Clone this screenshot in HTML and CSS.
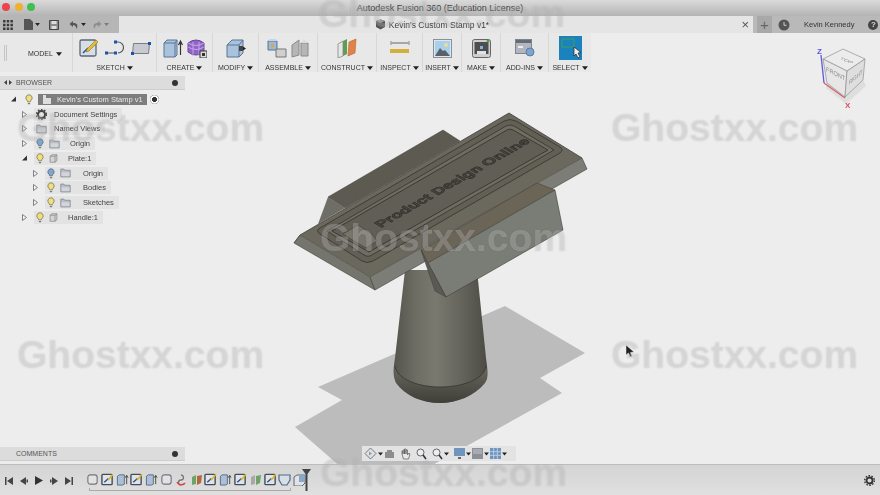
FILE: index.html
```html
<!DOCTYPE html>
<html lang="en">
<head>
    <meta charset="UTF-8">
    <title>Autodesk Fusion 360 (Education License)</title>
    <link rel="stylesheet" href="styles.css">
</head>
<body>
    <svg class="defs" width="0" height="0">
        <symbol id="bulb-y" viewBox="0 0 10 14"><path d="M5 1a4 4 0 0 1 2.4 7.2L6.6 10H3.400L2.600 8.200A4 4 0 0 1 5 1z" fill="#f1df7c" stroke="#77745a"/><path d="M3.500 11.500h3v1.500h-3z" fill="#777"/></symbol>
        <symbol id="bulb-b" viewBox="0 0 10 14"><path d="M5 1a4 4 0 0 1 2.400 7.200L6.600 10H3.400L2.600 8.200A4 4 0 0 1 5 1z" fill="#7ea6cf" stroke="#5d6b7a"/><path d="M3.500 11.500h3v1.500h-3z" fill="#777"/></symbol>
        <symbol id="folder" viewBox="0 0 14 12"><path d="M1 1h4l1 1.500h7V11H1z" fill="#b9bdc4" stroke="#85888e"/><path d="M2 5h10v5H2z" fill="#d2d5da"/></symbol>
        <symbol id="comp" viewBox="0 0 12 12"><path d="M1.500 3 4 1h6.500v8L8 11H1.500z" fill="#d5d5d5" stroke="#858585"/><path d="M8 3v8M1.500 3H8l2.500-2" fill="none" stroke="#858585"/></symbol>
        <symbol id="closed" viewBox="0 0 5 7"><path d="M.5.500 4.500 3.500.5 6.500z" fill="#f4f4f4" stroke="#666" stroke-width=".8"/></symbol>
        <symbol id="opened" viewBox="0 0 6 6"><path d="M6 0v6H0z" fill="#333"/></symbol>
        <symbol id="tl-sketch" viewBox="0 0 14 14"><rect x="1" y="1.500" width="11" height="11" rx="1" fill="#dfe3ea" stroke="#454c58" stroke-width="1.500"/><path d="M3.500 10 8 6" stroke="#2c4f86" stroke-width="1.500"/><path d="m7 7 5-6 1.500 1-5 6z" fill="#dcb92e"/></symbol>
        <symbol id="tl-box" viewBox="0 0 14 14"><rect x="2" y="2" width="10" height="10" rx="2.500" fill="#e2e2e2" stroke="#70767e" stroke-width="1.200"/></symbol>
        <symbol id="tl-ext" viewBox="0 0 14 14"><path d="M1.500 3.500 3.500 2H9v10l-2 1H1.500z" fill="#a9c0d8" stroke="#5a6b7c"/><path d="M11.500 12V3M10 5l1.500-2.500L13 5" fill="none" stroke="#444"/></symbol>
        <symbol id="arrow-dn" viewBox="0 0 8 5"><path d="M0 0h8L4 5z" fill="#222"/></symbol>
    </svg>

    <header class="titlebar">
        <div class="lights">
            <i class="light red"></i>
            <i class="light yellow"></i>
            <i class="light green"></i>
        </div>
        <span class="app-title">Autodesk Fusion 360 (Education License)</span>
    </header>

    <div class="tabbar">
        <div class="quick">
            <svg class="qa-grid" width="10" height="10" viewBox="0 0 10 10"><path d="M0 0h2.500v2.500H0zM3.700 0h2.500v2.500H3.700zM7.400 0h2.500v2.500H7.400zM0 3.700h2.500v2.500H0zM3.700 3.700h2.500v2.500H3.700zM7.400 3.700h2.500v2.500H7.400zM0 7.400h2.500v2.500H0zM3.700 7.400h2.500v2.500H3.700zM7.400 7.400h2.500v2.500H7.400z" fill="#3c3c3c"/></svg>
            <svg class="qa-file" width="9" height="11" viewBox="0 0 9 11"><path d="M0 0h6l3 3v8H0z" fill="#555"/></svg>
            <svg class="qa-arrow" width="5" height="3"><use href="#arrow-dn"/></svg>
            <svg class="qa-save" width="10" height="10" viewBox="0 0 10 10"><path d="M.5.5h9v9h-9z" fill="#8a8a8a" stroke="#444"/><path d="M2.500 1h5v3h-5zM2.500 6h5v3h-5z" fill="#ddd"/></svg>
            <svg class="qa-undo" width="10" height="10" viewBox="0 0 10 10"><path d="M4 1 .5 4 4 7V5c2 0 3 1 3.500 4C9.500 5 8 2.800 4 3z" fill="#555"/></svg>
            <svg class="qa-arrow" width="5" height="3"><use href="#arrow-dn"/></svg>
            <svg class="qa-redo" width="10" height="10" viewBox="0 0 10 10"><path d="M6 1l3.500 3L6 7V5C4 5 3 6 2.500 9 .5 5 2 2.800 6 3z" fill="#8e8e8e"/></svg>
            <svg class="qa-arrow faint" width="5" height="3"><use href="#arrow-dn"/></svg>
        </div>
        <div class="doc-tab">
            <span class="doc-name">
                <svg width="11" height="11" viewBox="0 0 11 11"><path d="M1 2 5.500.5 10 2v6L5.500 10.500 1 8z" fill="#555"/><path d="M1 2l4.500 2L10 2 5.500 .5z" fill="#9a9a9a"/></svg>
                Kevin's Custom Stamp v1*
            </span>
            <span class="doc-close">×</span>
        </div>
        <div class="tab-right">
            <span class="tab-plus">+</span>
            <svg class="clock" width="12" height="12" viewBox="0 0 12 12"><circle cx="6" cy="6" r="5.500" fill="#555"/><path d="M6 3v3.300h2.500" fill="none" stroke="#ccc"/></svg>
            <span class="user-name">Kevin Kennedy</span>
            <span class="help">?</span>
        </div>
    </div>

    <nav class="ribbon">
        <div class="grip"></div>
        <div class="workspace">MODEL <svg width="6" height="4"><use href="#arrow-dn"/></svg></div>

        <section class="group g-sketch">
            <div class="tools">
                <svg width="20" height="20" viewBox="0 0 20 20"><rect x="1" y="2" width="16" height="16" rx="1.500" fill="#d8dee6" stroke="#59677a" stroke-width="1.300"/><path d="M4 15 9 10" stroke="#24528f" stroke-width="1.500"/><path d="m8 11 9-9 2 2-9 9-3 1z" fill="#e5bd32" stroke="#8c7420" stroke-width=".6"/></svg>
                <svg width="20" height="16" viewBox="0 0 20 16"><path d="M2 13h9M10 2h3a5.500 5.500 0 0 1 0 11" fill="none" stroke="#555" stroke-width="1.200"/><g fill="#1f4fb0"><rect x="0" y="11.500" width="3" height="3"/><rect x="9" y="11.500" width="3" height="3"/><rect x="9" y=".5" width="3" height="3"/></g></svg>
                <svg width="20" height="14" viewBox="0 0 20 14"><path d="M2.500 2.500h16l-1 10h-16z" fill="#c7cad0" stroke="#7a7d84"/><g fill="#1f4fb0"><rect x="17" y="1" width="3" height="3"/><rect x="0" y="11" width="3" height="3"/></g></svg>
            </div>
            <span class="label">SKETCH <svg width="6" height="4"><use href="#arrow-dn"/></svg></span>
        </section>

        <section class="group g-create">
            <div class="tools">
                <svg width="20" height="20" viewBox="0 0 20 20"><path d="M1 5 4 2h10v15l-2 2H1z" fill="#a9c3de" stroke="#5a7492"/><path d="M12 19V5H1M12 5l2-3" fill="none" stroke="#5a7492"/><path d="M17.500 17V4M15.500 7l2-4 2 4" fill="none" stroke="#333" stroke-width="1.200"/></svg>
                <svg width="20" height="20" viewBox="0 0 20 20"><path d="M1 5q8-6 16 0v9q-8 6-16 0z" fill="#9264c9" stroke="#6a4498"/><path d="M1 9q8 5 16 0M1 5q8 5 16 0M6 4v14M12 4v14" fill="none" stroke="#c7aee6" stroke-width=".9"/><rect x="13" y="13" width="7" height="7" fill="#ddd" stroke="#333"/><path d="M15 15h3v3h-3z" fill="#333"/></svg>
            </div>
            <span class="label">CREATE <svg width="6" height="4"><use href="#arrow-dn"/></svg></span>
        </section>

        <section class="group g-modify">
            <div class="tools">
                <svg width="20" height="20" viewBox="0 0 20 20"><path d="M1 7 6 2h11v13l-4 4H1z" fill="#a9c3de" stroke="#5a7492"/><path d="M13 19V7H1M13 7l4-5" fill="none" stroke="#5a7492"/><path d="M13 8h4v5h-4z" fill="#444"/><path d="m17 8.500 3 2-3 2z" fill="#222"/></svg>
            </div>
            <span class="label">MODIFY <svg width="6" height="4"><use href="#arrow-dn"/></svg></span>
        </section>

        <section class="group g-assemble">
            <div class="tools">
                <svg width="20" height="20" viewBox="0 0 20 20"><path d="M1 3h9v9H1z" fill="#9cb9d6" stroke="#5a7492"/><path d="M9 11h10v8H9z" fill="#d0d0d0" stroke="#777"/><path d="M3 1h6l1 2H1z" fill="#c4d6e8"/><path d="M4 6h3v3H4z" fill="#e6a23c"/></svg>
                <svg width="18" height="20" viewBox="0 0 18 20"><path d="M1 7 8 2v15l-7 2zM10 5h7v13h-7z" fill="#b6b6b6" stroke="#8a8a8a"/><path d="M10 5l3-4 4 4" fill="#dcdcdc"/></svg>
            </div>
            <span class="label">ASSEMBLE <svg width="6" height="4"><use href="#arrow-dn"/></svg></span>
        </section>

        <section class="group g-construct">
            <div class="tools">
                <svg width="20" height="20" viewBox="0 0 20 20"><path d="M1 6 6 3v15l-5 2z" fill="#e6e6e6" stroke="#999"/><path d="M6 3l4-2v15l-4 2z" fill="#5f9d57"/><path d="m12 4 7-3-1 14-7 3z" fill="#e0824a" stroke="#b8642f" stroke-width=".6"/></svg>
            </div>
            <span class="label">CONSTRUCT <svg width="6" height="4"><use href="#arrow-dn"/></svg></span>
        </section>

        <section class="group g-inspect">
            <div class="tools">
                <svg width="20" height="14" viewBox="0 0 20 14"><path d="M1.500 2h17" stroke="#666"/><path d="M1 0v4M19 0v4" stroke="#888"/><rect x="0" y="8" width="19" height="4" fill="#d3b03c"/></svg>
            </div>
            <span class="label">INSPECT <svg width="6" height="4"><use href="#arrow-dn"/></svg></span>
        </section>

        <section class="group g-insert">
            <div class="tools">
                <svg width="19" height="19" viewBox="0 0 19 19"><rect x=".5" y=".5" width="18" height="18" fill="#dfe7ee" stroke="#8b8f96"/><rect x="2" y="2" width="15" height="15" fill="#a9d0ea"/><circle cx="13" cy="6" r="2" fill="#f2dc93"/><path d="m2 17 5-8 3 3 2-1 5 6z" fill="#5a6068"/></svg>
            </div>
            <span class="label">INSERT <svg width="6" height="4"><use href="#arrow-dn"/></svg></span>
        </section>

        <section class="group g-make">
            <div class="tools">
                <svg width="19" height="19" viewBox="0 0 19 19"><rect x=".5" y=".5" width="18" height="18" rx="2" fill="#cfcfcf" stroke="#666"/><rect x="2.500" y="3" width="14" height="12" fill="#4e4e4e"/><path d="M5 12h9v3H5z" fill="#e2e2e2"/><path d="M8 7h3v3H8z" fill="#84b4dc"/><circle cx="16" cy="2" r="1.500" fill="#4fa24a"/></svg>
            </div>
            <span class="label">MAKE <svg width="6" height="4"><use href="#arrow-dn"/></svg></span>
        </section>

        <section class="group g-addins">
            <div class="tools">
                <svg width="20" height="18" viewBox="0 0 20 18"><rect x=".5" y=".5" width="16" height="14" fill="#b2b7bf" stroke="#7f848c"/><path d="M1 1h15v3H1z" fill="#666c75"/><path d="M3 7h5v2H3z" fill="#eee"/><circle cx="15" cy="13" r="4" fill="#7fa3cb" stroke="#5b7ca4"/></svg>
            </div>
            <span class="label">ADD-INS <svg width="6" height="4"><use href="#arrow-dn"/></svg></span>
        </section>

        <section class="group g-select">
            <div class="tools">
                <div class="select-tile">
                    <svg width="23" height="24" viewBox="0 0 23 24"><rect x="3" y="3" width="12" height="8" fill="none" stroke="#3d9a6c" stroke-width="1.200"/><path d="m15 11 0 9 2-2 2 4 2-1-2-4 3-.5z" fill="#eee" stroke="#222" stroke-width=".7"/></svg>
                </div>
            </div>
            <span class="label">SELECT <svg width="6" height="4"><use href="#arrow-dn"/></svg></span>
        </section>
    </nav>

    <main class="viewport">
        <!-- the model is drawn on a free canvas behind the panels -->
        <svg class="model" width="880" height="392" viewBox="0 72 880 392">
            <defs>
                <linearGradient id="handle" x1="0" x2="1" y1="0" y2="0">
                    <stop offset="0" stop-color="#55544c"/>
                    <stop offset=".25" stop-color="#6f6e65"/>
                    <stop offset=".45" stop-color="#7a796f"/>
                    <stop offset=".75" stop-color="#63625a"/>
                    <stop offset="1" stop-color="#4b4a43"/>
                </linearGradient>
                <linearGradient id="dome" x1="0" x2="0" y1="0" y2="1">
                    <stop offset="0" stop-color="#6a695f"/>
                    <stop offset="1" stop-color="#3f3e38"/>
                </linearGradient>
            </defs>

            <!-- shadow -->
            <path d="M505 306 585 353 540 378 562 393 375 497 295 427 342 400 318 387z" fill="#bcbcbc"/>

            <!-- handle -->
            <path d="M405 270 477 270 486 358C488 372 488 377 486 381 475 396 456 403 440 403 423 403 405 396 396 381 393 377 393 370 395 358z" fill="url(#handle)"/>
            <path d="M395 366C397 380 420 387 440 387 462 387 484 380 486 366 488 375 487 379 485 383 475 396 456 403 440 403 423 403 405 396 396 383 394 379 394 373 395 366z" fill="url(#dome)"/>
            <path d="M395 366C397 380 420 387 440 387 462 387 484 380 486 366" fill="none" stroke="#35342f" stroke-width=".8"/>

            <!-- back of the block -->
            <path d="M328 197 443 130 460 141 345 208z" fill="#5c5a51" stroke="#3f3e38" stroke-width=".5"/>
            <path d="M328 197 345 208 318 224z" fill="#6f6e66"/>

            <!-- plate top and bevel -->
            <path d="M300 235 509 113 582 158 370 277z" fill="#6b685e"/>
            <path d="M300 235 370 277 375 290 294 243z" fill="#74756d" stroke="#3f3e38" stroke-width=".6" stroke-linejoin="round"/>
            <path d="M370 277 582 158 587 169 375 290z" fill="#7b7d76" stroke="#3f3e38" stroke-width=".6" stroke-linejoin="round"/>
            <path d="M300 235 509 113 582 158" fill="none" stroke="#3f3e38" stroke-width=".8"/>
            <path d="M300 235 294 243" stroke="#3f3e38" stroke-width=".6"/>

            <!-- block under the plate, in front of the bevel -->
            <path d="M421 250 537 183 555 190 428 263z" fill="#6b6558" stroke="#3f3e38" stroke-width=".5"/>
            <path d="M428 263 555 190 563 230 446 297z" fill="#7a7d75" stroke="#3f3e38" stroke-width=".6"/>
            <path d="M421 250 428 263 446 297 435 291z" fill="#5b5a52" stroke="#3f3e38" stroke-width=".5"/>

            <!-- raised border and recess -->
            <path d="M320 228 504 121Q510 118 516 121L560 147Q564 150 560 153L373 261Q367 264 362 261L320 234Q315 231 320 228z" fill="#625f55" stroke="#3a3934" stroke-width=".9"/>
            <path d="M327 231 506 126Q510 124 514 126L554 150 370 256Q367 257 364 255z" fill="#6f6c62" stroke="#3a3934" stroke-width=".9"/>
            <path d="M332 231 507 130Q510 128 513 130L548 150 369 252z" fill="#615e55" stroke="#36352f" stroke-width=".9"/>

            <!-- logo and raised lettering -->
            <path d="M343 234 358 225 372 234 377 241 366 248 349 238z" fill="#77746a" stroke="#48473f" stroke-width=".8"/>
            <text class="stamp-text" transform="matrix(.87 -.5 .7 .4 381 228)">Product Design Online</text>
        </svg>

        <aside class="browser">
            <div class="panel-head">
                <svg class="collapse" width="8" height="5" viewBox="0 0 8 5"><path d="M0 2.500 3 0v5zM8 2.500 5 0v5z" fill="#444"/></svg>
                <span class="panel-title">BROWSER</span>
                <i class="pin"></i>
            </div>
            <ul class="tree">
                <li class="row root">
                    <svg class="tw" width="5" height="6"><use href="#opened"/></svg>
                    <svg class="bulb" width="8" height="11"><use href="#bulb-y"/></svg>
                    <span class="root-name">
                        <svg width="8" height="9" viewBox="0 0 8 9"><path d="M0 0h3v3h5v6H0z" fill="#ddd"/></svg>
                        Kevin's Custom Stamp v1
                    </span>
                    <i class="radio"></i>
                </li>
                <li class="row d1">
                    <svg class="tw" width="5" height="7"><use href="#closed"/></svg>
                    <span class="chip">
                        <svg width="11" height="11" viewBox="0 0 11 11"><circle cx="5.500" cy="5.500" r="3.500" fill="none" stroke="#444" stroke-width="2"/><circle cx="5.500" cy="5.500" r="5" fill="none" stroke="#444" stroke-width="1.500" stroke-dasharray="1.600 1.600"/></svg>
                        <span class="nm s1">Document Settings</span>
                    </span>
                </li>
                <li class="row d1">
                    <svg class="tw" width="5" height="7"><use href="#closed"/></svg>
                    <span class="chip">
                        <svg width="11" height="10"><use href="#folder"/></svg>
                        <span class="nm s1">Named Views</span>
                    </span>
                </li>
                <li class="row d1">
                    <svg class="tw" width="5" height="7"><use href="#closed"/></svg>
                    <span class="chip">
                        <svg width="8" height="11"><use href="#bulb-b"/></svg>
                        <svg class="ico" width="11" height="10"><use href="#folder"/></svg>
                        <span class="nm s2">Origin</span>
                    </span>
                </li>
                <li class="row d1">
                    <svg class="tw" width="5" height="6"><use href="#opened"/></svg>
                    <span class="chip">
                        <svg width="8" height="11"><use href="#bulb-y"/></svg>
                        <svg class="ico" width="9" height="9"><use href="#comp"/></svg>
                        <span class="nm s2">Plate:1</span>
                    </span>
                </li>
                <li class="row d2">
                    <svg class="tw" width="5" height="7"><use href="#closed"/></svg>
                    <span class="chip">
                        <svg width="8" height="11"><use href="#bulb-b"/></svg>
                        <svg class="ico" width="11" height="10"><use href="#folder"/></svg>
                        <span class="nm s3">Origin</span>
                    </span>
                </li>
                <li class="row d2">
                    <svg class="tw" width="5" height="7"><use href="#closed"/></svg>
                    <span class="chip">
                        <svg width="8" height="11"><use href="#bulb-y"/></svg>
                        <svg class="ico" width="11" height="10"><use href="#folder"/></svg>
                        <span class="nm s3">Bodies</span>
                    </span>
                </li>
                <li class="row d2">
                    <svg class="tw" width="5" height="7"><use href="#closed"/></svg>
                    <span class="chip">
                        <svg width="8" height="11"><use href="#bulb-y"/></svg>
                        <svg class="ico" width="11" height="10"><use href="#folder"/></svg>
                        <span class="nm s3">Sketches</span>
                    </span>
                </li>
                <li class="row d1">
                    <svg class="tw" width="5" height="7"><use href="#closed"/></svg>
                    <span class="chip">
                        <svg width="8" height="11"><use href="#bulb-y"/></svg>
                        <svg class="ico" width="9" height="9"><use href="#comp"/></svg>
                        <span class="nm s2">Handle:1</span>
                    </span>
                </li>
            </ul>
        </aside>

        <div class="panel-head comments">
            <span class="panel-title">COMMENTS</span>
            <i class="pin"></i>
        </div>

        <div class="viewcube">
            <svg width="66" height="66" viewBox="0 0 66 66">
                <path d="M11 39 29 53 47 36 50 42 30 60 10 44z" fill="#d9d9d9" opacity=".8"/>
                <path d="M5 11 8 39" stroke="#5a5ae0" stroke-width="1.300"/>
                <path d="M8 39 29 54" stroke="#d8606b" stroke-width="1.300"/>
                <path d="M27 5 49 15 31 27 7 15z" fill="#ececec" stroke="#8f8f8f" stroke-width=".7"/>
                <path d="M7 15 31 27 29 53 11 39z" fill="#e6e6e6" stroke="#8f8f8f" stroke-width=".7"/>
                <path d="M31 27 49 15 47 36 29 53z" fill="#dedede" stroke="#8f8f8f" stroke-width=".7"/>
                <text class="cube-text" transform="matrix(.9 .35 -.5 .35 23 15)">TOP</text>
                <text class="cube-text" transform="matrix(.8 .4 0 .9 10 27)">FRONT</text>
                <text class="cube-text" transform="matrix(.62 -.52 0 .9 33 41)">RIGHT</text>
                <text class="cube-x" x="29" y="64">X</text>
                <text class="cube-z" x="1" y="10">Z</text>
            </svg>
        </div>

        <svg class="cursor" width="10" height="13" viewBox="0 0 10 13"><path d="M1 0v10l2.500-2 1.500 4 2-1-1.500-3.500L9 7z" fill="#222" stroke="#eee" stroke-width=".5"/></svg>

        <div class="navbar">
            <svg width="13" height="13" viewBox="0 0 13 13"><path d="M6.500 1 12 6.500 6.500 12 1 6.500z" fill="#dde2e8" stroke="#777"/><path d="M5 4.500 8 6.500 5 8.500z" fill="#999"/></svg>
            <svg class="nav-arrow" width="5" height="4"><use href="#arrow-dn"/></svg>
            <svg width="11" height="11" viewBox="0 0 11 11"><path d="M1 4h9v6H1zM3 2h5v2H3z" fill="#8d8d8d"/></svg>
            <svg class="nav-gap" width="11" height="12" viewBox="0 0 11 12"><path d="M2 6V3h1v3-4h1.500v4-5H6v5-4h1.500v5L9 5l1 1-1.500 5h-5z" fill="#e8e8e8" stroke="#555" stroke-width=".7"/></svg>
            <svg class="nav-gap" width="11" height="12" viewBox="0 0 11 12"><circle cx="4.500" cy="4.500" r="3.500" fill="#e8eef3" stroke="#666"/><path d="m7 7 3 4" stroke="#333" stroke-width="1.500"/></svg>
            <svg class="nav-gap" width="11" height="12" viewBox="0 0 11 12"><circle cx="4.500" cy="4.500" r="3.500" fill="#e8eef3" stroke="#666"/><path d="m7 7 3 4" stroke="#333" stroke-width="1.500"/></svg>
            <svg class="nav-arrow" width="5" height="4"><use href="#arrow-dn"/></svg>
            <svg class="nav-gap" width="11" height="11" viewBox="0 0 11 11"><path d="M0 0h11v8H0z" fill="#6f95bf"/><path d="M4 9h3v2H4z" fill="#666"/></svg>
            <svg class="nav-arrow" width="5" height="4"><use href="#arrow-dn"/></svg>
            <svg width="11" height="11" viewBox="0 0 11 11"><path d="M0 0h11v11H0z" fill="#8d9097"/><path d="M1 1h9v5H1z" fill="#a8abb1"/></svg>
            <svg class="nav-arrow" width="5" height="4"><use href="#arrow-dn"/></svg>
            <svg width="11" height="11" viewBox="0 0 11 11"><path d="M0 0h11v11H0z" fill="#6f95bf"/><path d="M0 3.700h11M0 7.300h11M3.700 0v11M7.300 0v11" stroke="#c9d8e8" stroke-width=".8"/></svg>
            <svg class="nav-arrow" width="5" height="4"><use href="#arrow-dn"/></svg>
        </div>
    </main>

    <footer class="timeline">
        <div class="player">
            <svg width="8" height="8" viewBox="0 0 8 8"><path d="M0 0h1.500v8H0zM8 0v8L2 4z" fill="#444"/></svg>
            <svg width="8" height="8" viewBox="0 0 8 8"><path d="M6 0v8L0 4zM6.500 2.500H8v3H6.500z" fill="#444"/></svg>
            <svg width="8" height="9" viewBox="0 0 8 9"><path d="M0 0l8 4.500L0 9z" fill="#333"/></svg>
            <svg width="8" height="8" viewBox="0 0 8 8"><path d="M2 0v8l6-4zM0 2.500h1.500v3H0z" fill="#444"/></svg>
            <svg width="8" height="8" viewBox="0 0 8 8"><path d="M0 0v8l6-4zM6.500 0H8v8H6.500z" fill="#444"/></svg>
        </div>
        <div class="track">
            <div class="steps">
                <svg width="13" height="13"><use href="#tl-box"/></svg>
                <svg width="13" height="13"><use href="#tl-sketch"/></svg>
                <svg width="13" height="13"><use href="#tl-ext"/></svg>
                <svg width="13" height="13"><use href="#tl-sketch"/></svg>
                <svg width="13" height="13"><use href="#tl-ext"/></svg>
                <svg width="13" height="13"><use href="#tl-box"/></svg>
                <svg width="13" height="13" viewBox="0 0 13 13"><path d="M6 2a2.500 2.500 0 0 1 0 5 2.500 2.500 0 0 0 0 5" fill="none" stroke="#777" stroke-width="1.300"/><path d="M2 9c1 3 6 4 8 1" fill="none" stroke="#d9434a" stroke-width="1.500"/></svg>
                <svg width="13" height="13" viewBox="0 0 13 13"><path d="M2 4 6 2v9l-4 1z" fill="#6fa468"/><path d="m7 3 5-1-1 8-4 2z" fill="#b2683e"/></svg>
                <svg width="13" height="13"><use href="#tl-sketch"/></svg>
                <svg width="13" height="13"><use href="#tl-ext"/></svg>
                <svg width="13" height="13"><use href="#tl-sketch"/></svg>
                <svg width="13" height="13" viewBox="0 0 13 13"><path d="M2 4 6 2v9l-4 1z" fill="#a8a8a8"/><path d="m7 3 5-1-1 8-4 2z" fill="#6fa468"/></svg>
                <svg width="13" height="13"><use href="#tl-sketch"/></svg>
                <svg width="13" height="13" viewBox="0 0 13 13"><path d="M1 2h11v5l-3 5H4L1 7z" fill="#d8dee6" stroke="#4d6b8e" stroke-width="1.200"/></svg>
                <svg width="13" height="13" viewBox="0 0 13 13"><path d="M1 4 4 2h8v8l-3 3H1z" fill="#dfe3ea" stroke="#666"/><path d="M6 1h6v8H6z" fill="#8ba7c4"/></svg>
            </div>
            <div class="rail"></div>
            <svg class="marker" width="9" height="22" viewBox="0 0 9 22"><path d="M0 0h9L5.500 5V22h-2V5z" fill="#444"/></svg>
        </div>
        <svg class="settings" width="11" height="11" viewBox="0 0 11 11"><circle cx="5.500" cy="5.500" r="3" fill="none" stroke="#333" stroke-width="1.800"/><circle cx="5.500" cy="5.500" r="4.800" fill="none" stroke="#333" stroke-width="1.400" stroke-dasharray="1.600 1.400"/></svg>
    </footer>

    <!-- site watermark lies over everything -->
    <div class="marks" aria-hidden="true">
        <span class="mark m1">Ghostxx.com</span>
        <span class="mark m2">Ghostxx.com</span>
        <span class="mark m3">Ghostxx.com</span>
        <span class="mark m4">Ghostxx.com</span>
        <span class="mark m5">Ghostxx.com</span>
        <span class="mark m6">Ghostxx.com</span>
        <span class="mark m7">Ghostxx.com</span>
    </div>
</body>
</html>
```

FILE: styles.css
```css
* {
    box-sizing: border-box;
}

html, body {
    height: 100%;
}

body {
    margin: 0;
    width: 880px;
    height: 495px;
    overflow: hidden;
    position: relative;
    display: flex;
    flex-direction: column;
    font-family: 'Liberation Sans', Arial, sans-serif;
    color: #333;
    background-color: #ededed;
    filter: blur(.35px);
}

.defs {
    position: absolute;
}

svg {
    display: block;
    flex: none;
}

/* title bar */
.titlebar {
    height: 16px;
    flex: none;
    position: relative;
    display: flex;
    justify-content: center;
    align-items: center;
    background: linear-gradient(#dadada, #b4b4b4);
}

.lights {
    position: absolute;
    left: 2px;
    top: 3px;
    display: flex;
    gap: 4.500px;
}

.light {
    width: 8px;
    height: 8px;
    border-radius: 50%;
}

.light.red { background-color: #e8464c; }
.light.yellow { background-color: #eeb02f; }
.light.green { background-color: #3fc04e; }

.app-title {
    font-size: 9px;
    color: #444;
}

/* tab row */
.tabbar {
    height: 17px;
    flex: none;
    display: flex;
    font-size: 7.500px;
}

.quick {
    width: 119px;
    display: flex;
    align-items: center;
    padding-left: 3px;
    background-color: #b6b6b6;
}

.qa-file { margin-left: 11px; }
.qa-arrow { margin-left: 2px; }
.qa-save { margin-left: 9px; }
.qa-undo { margin-left: 10px; }
.qa-redo { margin-left: 6px; }
.qa-arrow.faint { opacity: .4; }

.doc-tab {
    width: 634px;
    position: relative;
    display: flex;
    justify-content: center;
    align-items: center;
    background-color: #e5e5e5;
    padding-right: 8px;
}

.doc-name {
    display: flex;
    align-items: center;
    gap: 3px;
    font-size: 8.500px;
    color: #3a3a3a;
}

.doc-close {
    position: absolute;
    right: 4px;
    top: 1px;
    font-size: 13px;
    line-height: 15px;
    color: #555;
}

.tab-right {
    flex: 1;
    display: flex;
    align-items: center;
    background-color: #b9b9b9;
}

.tab-plus {
    width: 15px;
    height: 17px;
    margin-left: 4px;
    text-align: center;
    font-size: 15px;
    line-height: 17px;
    color: #666;
    background-color: #a8a8a8;
}

.clock { margin-left: 6px; }

.user-name {
    margin-left: 14px;
    white-space: nowrap;
    color: #333;
}

.help {
    width: 10px;
    height: 10px;
    margin-left: 14px;
    border-radius: 50%;
    background-color: #444;
    color: #ddd;
    font-size: 8px;
    font-weight: bold;
    line-height: 10px;
    text-align: center;
}

/* ribbon */
.ribbon {
    height: 39px;
    width: 591px;
    flex: none;
    display: flex;
    background-color: #e8e8e8;
    font-size: 7px;
}

.grip {
    width: 3px;
    height: 16px;
    margin: 12px 0 0 4px;
    border-left: 1px solid #c4c4c4;
    border-right: 1px solid #c4c4c4;
}

.workspace {
    width: 66px;
    padding: 17px 0 0 21px;
    display: flex;
    align-items: flex-start;
    gap: 3px;
    color: #333;
    border-right: 1px solid #d8d8d8;
}

.workspace svg { margin-top: 2px; }

.group {
    display: flex;
    flex-direction: column;
    align-items: center;
    justify-content: space-between;
    padding: 3px 0 1px;
    border-right: 1px solid #d8d8d8;
}

.tools {
    height: 24px;
    display: flex;
    align-items: center;
    gap: 4px;
}

.label {
    display: flex;
    align-items: center;
    gap: 2px;
    white-space: nowrap;
    color: #333;
}

.g-sketch { width: 84px; }
.g-sketch .tools { gap: 6px; }
.g-create { width: 56px; }
.g-modify { width: 46px; }
.g-assemble { width: 59px; }
.g-construct { width: 59px; }
.g-inspect { width: 46px; }
.g-insert { width: 39px; }
.g-make { width: 39px; }
.g-addins { width: 48px; }
.g-select { flex: 1; border-right: 0; }

.select-tile {
    width: 23px;
    height: 24px;
    background-color: #1a82bd;
}

/* viewport */
.viewport {
    flex: 1;
    position: relative;
    display: flex;
    flex-direction: column;
    justify-content: space-between;
    padding: 4px 0 3px;
    background-color: #ededed;
}

.model {
    position: absolute;
    left: 0;
    top: 0;
}

.stamp-text {
    font-family: 'Liberation Sans', Arial, sans-serif;
    font-size: 16px;
    font-weight: bold;
    fill: #47463f;
    stroke: #2b2a26;
    stroke-width: .7px;
}

.browser {
    position: relative;
    width: 185px;
}

.panel-head {
    position: relative;
    width: 185px;
    height: 14px;
    display: flex;
    align-items: center;
    background-color: #dcdcdc;
    border-bottom: 1px solid #cdcdcd;
    font-size: 7px;
    color: #555;
}

.collapse { margin-left: 4px; }

.panel-title { margin-left: 4px; }

.comments .panel-title { margin-left: 16px; }

.pin {
    position: absolute;
    right: 7px;
    top: 4px;
    width: 6px;
    height: 6px;
    border-radius: 50%;
    background-color: #333;
}

.tree {
    list-style: none;
    margin: 0;
    padding: 2px 0 0;
}

.row {
    height: 14.750px;
    display: flex;
    align-items: center;
    font-size: 7.500px;
    color: #444;
}

.root { padding-left: 11px; }
.d1 { padding-left: 22px; }
.d2 { padding-left: 33px; }

.bulb { margin-left: 9px; }

.root-name {
    width: 109px;
    height: 11px;
    margin-left: 5px;
    display: flex;
    align-items: center;
    gap: 6px;
    padding-left: 5px;
    background-color: #7d7d7d;
    color: #e9e9e9;
}

.radio {
    width: 9px;
    height: 9px;
    margin-left: 3px;
    border-radius: 50%;
    background: radial-gradient(#333 35%, #fff 40%, #fff 60%, #888 70%);
}

.chip {
    height: 13px;
    margin-left: 7px;
    padding: 0 5px 0 2px;
    display: flex;
    align-items: center;
    gap: 5px;
    background-color: #e3e3e3;
}

.nm.s1 { margin-left: 2px; }
.nm.s2 { margin-left: 5px; }
.nm.s3 { margin-left: 7px; }

.viewcube {
    position: absolute;
    left: 816px;
    top: -28px;
}

.cube-text {
    font-size: 7px;
    fill: #8c8c8c;
}

.cube-x {
    font-size: 8px;
    font-weight: bold;
    fill: #d8505c;
}

.cube-z {
    font-size: 8px;
    font-weight: bold;
    fill: #5555dd;
}

.cursor {
    position: absolute;
    left: 625px;
    top: 273px;
}

.navbar {
    position: absolute;
    left: 362px;
    top: 374px;
    width: 154px;
    height: 15px;
    display: flex;
    align-items: center;
    gap: 1px;
    padding-left: 2px;
    background-color: #e3e3e3;
}

.nav-gap { margin-left: 4px; }

/* timeline */
.timeline {
    height: 31px;
    flex: none;
    display: flex;
    align-items: flex-start;
    background: linear-gradient(#d4d4d4, #e0e0e0);
    border-top: 1px solid #bdbdbd;
}

.player {
    display: flex;
    align-items: center;
    gap: 7px;
    margin: 11px 0 0 5px;
}

.track {
    position: relative;
    width: 226px;
    margin-left: 12px;
    padding-top: 8px;
}

.steps {
    display: flex;
    gap: 1.800px;
    padding-left: 1px;
}

.rail {
    height: 3px;
    margin: 2px 20px 0 4px;
    border: 1px solid #aaa;
    border-top: 0;
}

.marker {
    position: absolute;
    left: 217px;
    top: 4px;
}

.settings {
    margin: 10px 0 0 auto;
    margin-right: 5px;
}

/* watermark */
.marks {
    position: absolute;
    left: 0;
    top: 0;
    width: 880px;
    height: 495px;
}

.mark {
    position: absolute;
    font-family: 'Liberation Sans', Arial, sans-serif;
    font-size: 39px;
    line-height: 40px;
    font-weight: bold;
    white-space: nowrap;
    color: rgba(255, 255, 255, .2);
    text-shadow: 0 0 1.500px rgba(80, 80, 80, .22);
}

.m1 { left: 318px; top: -6px; }
.m2 { left: 17px; top: 108px; }
.m3 { left: 611px; top: 108px; }
.m4 { left: 320px; top: 218px; }
.m5 { left: 17px; top: 335px; }
.m6 { left: 611px; top: 335px; }
.m7 { left: 320px; top: 453px; }
```
